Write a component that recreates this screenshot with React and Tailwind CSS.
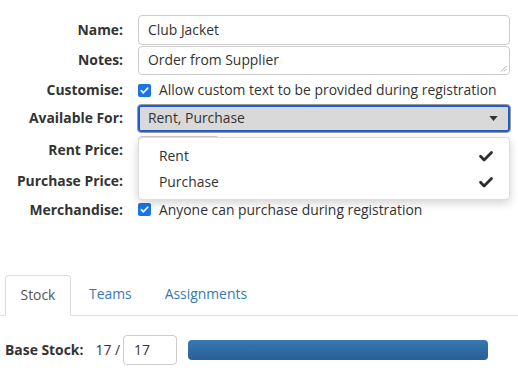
import React from "react";

const font = { fontFamily: '"Open Sans", "Noto Sans", sans-serif' };

function Check({ className = "" }) {
  return (
    <svg viewBox="0 0 16 16" className={className} fill="none">
      <path d="M2.5 8.3l3.6 3.6L13.5 4.5" stroke="#2d2d2d" strokeWidth="2.8" strokeLinecap="round" strokeLinejoin="round" />
    </svg>
  );
}

function CheckBox() {
  return (
    <span className="w-[13px] h-[13px] rounded-[2px] bg-[#1a73e8] flex items-center justify-center shrink-0">
      <svg viewBox="0 0 12 12" className="w-[11px] h-[11px]" fill="none">
        <path d="M2.5 6.2l2.3 2.3L9.6 3.4" stroke="white" strokeWidth="1.8" strokeLinecap="round" strokeLinejoin="round" />
      </svg>
    </span>
  );
}

function Label({ children }) {
  return <div className="w-[123px] text-right font-bold text-[#333] shrink-0">{children}</div>;
}

export default function App() {
  return (
    <div className="w-[518px] h-[377px] bg-white text-[13.9px] text-[#333] overflow-hidden relative" style={font}>
      <div className="pt-[15px] flex flex-col">
        <div className="flex items-center h-[30px] gap-[15px]">
          <Label>Name:</Label>
          <div className="w-[372px] h-[30px] border border-[#ccc] rounded-[4px] flex items-center pl-[9px]">Club Jacket</div>
        </div>
        <div className="flex items-center h-[29px] mt-[1px] gap-[15px]">
          <Label>Notes:</Label>
          <div className="w-[372px] h-[29px] border border-[#ccc] rounded-[4px] flex items-center pl-[9px] relative">
            Order from Supplier
            <svg className="absolute right-[2px] bottom-[2px] w-[7px] h-[7px]" viewBox="0 0 7 7">
              <path d="M1 6.5L6.5 1M4 6.5L6.5 4" stroke="#999" strokeWidth="0.8" />
            </svg>
          </div>
        </div>
        <div className="flex items-center h-[29px] pt-[2px] gap-[15px]">
          <Label>Customise:</Label>
          <div className="flex items-center gap-[8px]">
            <CheckBox />
            <span>Allow custom text to be provided during registration</span>
          </div>
        </div>
        <div className="flex items-center h-[29px] gap-[14px]">
          <Label>Available For:</Label>
          <div className="w-[374px] h-[29px] border border-[#9a9a9a] rounded-[4px] p-0">
            <div className="h-full w-full border-2 border-[#1d5fd1] rounded-[3px] bg-[#d9d9d9] flex items-center pl-[8px] pr-[10px] justify-between">
              <span>Rent, Purchase</span>
              <svg viewBox="0 0 10 6" className="w-[9px] h-[5px]"><path d="M0 0h10L5 6z" fill="#333" /></svg>
            </div>
          </div>
        </div>
        <div className="flex items-center h-[31px] mt-[2px] gap-[15px]">
          <Label>Rent Price:</Label>
          <div className="w-[82px] h-[29px] border border-[#ccc] rounded-[4px]" />
        </div>
        <div className="flex items-center h-[30px] gap-[15px]">
          <Label>Purchase Price:</Label>
          <div className="w-[82px] h-[29px] border border-[#ccc] rounded-[4px]" />
        </div>
        <div className="flex items-center h-[28px] gap-[15px]">
          <Label>Merchandise:</Label>
          <div className="flex items-center gap-[8px]">
            <CheckBox />
            <span>Anyone can purchase during registration</span>
          </div>
        </div>
      </div>

      {/* dropdown menu */}
      <div className="absolute left-[138px] top-[137px] w-[372px] h-[63px] bg-white border border-[#ddd] rounded-[4px] shadow-[0_3px_10px_rgba(0,0,0,0.18)] flex flex-col pt-[5px]">
        <div className="flex items-center justify-between h-[26px] pl-[20px] pr-[15px]">
          <span>Rent</span>
          <Check className="w-[16px] h-[16px]" />
        </div>
        <div className="flex items-center justify-between h-[26px] pl-[20px] pr-[15px]">
          <span>Purchase</span>
          <Check className="w-[16px] h-[16px]" />
        </div>
      </div>

      {/* tabs */}
      <div className="mt-[51px] flex items-end border-b border-[#ddd] h-[41px]">
        <div className="ml-[5px] h-[41px] w-[66px] border border-[#ddd] border-b-white rounded-t-[4px] bg-white flex items-center justify-center -mb-px text-[#555]">Stock</div>
        <div className="h-[41px] flex items-center ml-[18px] text-[#337ab7]">Teams</div>
        <div className="h-[41px] flex items-center ml-[33px] text-[#337ab7]">Assignments</div>
      </div>

      {/* base stock */}
      <div className="flex items-center mt-[19px] pl-[5px] h-[30px]">
        <span className="font-bold">Base Stock:</span>
        <span className="ml-[12px]">17 /</span>
        <div className="ml-[3px] w-[54px] h-[30px] border border-[#ccc] rounded-[4px] flex items-center pl-[10px]">17</div>
        <div className="ml-[11px] w-[300px] h-[20px] rounded-[4px] bg-gradient-to-b from-[#3778b6] to-[#2b5f92]" />
      </div>
    </div>
  );
}
